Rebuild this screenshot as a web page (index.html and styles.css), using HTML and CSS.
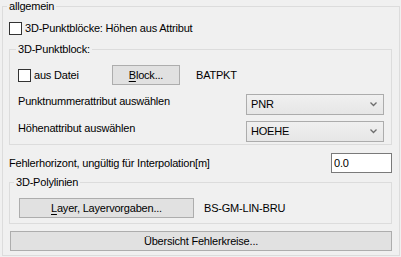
FILE: index.html
```html
<!DOCTYPE html>
<html lang="de">
<head>
    <meta charset="UTF-8">
    <title>Höhen aus Attribut</title>
    <link rel="stylesheet" href="styles.css">
</head>
<body>
    <fieldset class="group outer">
        <legend>allgemein</legend>
        <div class="stack">
            <label class="check-row"><span class="box"></span>3D-Punktblöcke: Höhen aus Attribut</label>

            <fieldset class="group punkt">
                <legend>3D-Punktblock:</legend>
                <div class="row file-row">
                    <label class="check-row file-check"><span class="box"></span>aus Datei</label>
                    <button class="btn block-btn"><u>B</u>lock...</button>
                    <span class="value">BATPKT</span>
                </div>
                <div class="row attr-row first">
                    <span class="attr-label">Punktnummerattribut auswählen</span>
                    <div class="combo">
                        <span>PNR</span>
                        <svg width="7" height="5" viewBox="0 0 7 5"><path d="M0.5 0.5 L3.5 3.5 L6.5 0.5" fill="none" stroke="#6d6d6d" stroke-width="1.3"/></svg>
                    </div>
                </div>
                <div class="row attr-row">
                    <span class="attr-label">Höhenattribut auswählen</span>
                    <div class="combo">
                        <span>HOEHE</span>
                        <svg width="7" height="5" viewBox="0 0 7 5"><path d="M0.5 0.5 L3.5 3.5 L6.5 0.5" fill="none" stroke="#6d6d6d" stroke-width="1.3"/></svg>
                    </div>
                </div>
            </fieldset>

            <div class="row tol-row">
                <span>Fehlerhorizont, ungültig für Interpolation[m]</span>
                <input class="num" type="text" value="0.0">
            </div>

            <fieldset class="group poly">
                <legend>3D-Polylinien</legend>
                <div class="row">
                    <button class="btn layer-btn"><u>L</u>ayer, Layervorgaben...</button>
                    <span class="value layer-value">BS-GM-LIN-BRU</span>
                </div>
            </fieldset>

            <button class="btn wide-btn">Übersicht Fehlerkreise...</button>
        </div>
    </fieldset>
</body>
</html>
```

FILE: styles.css
```css
html, body {
    margin: 0;
    width: 401px;
    height: 257px;
    overflow: hidden;
    background-color: #f0f0f0;
    font-family: "Liberation Sans", Arial, sans-serif;
    font-size: 11px;
    line-height: 13px;
    letter-spacing: -0.2px;
    color: #000;
}
.group {
    border: 1px solid #dcdcdc;
    margin: 0;
    min-width: 0;
}
.group legend {
    padding: 0 2px;
    margin-left: -2px;
    line-height: 13px;
}
.outer {
    margin: 0 1px 0 2px;
    padding: 9px 7px 4px 6px;
}
.stack {
    display: flex;
    flex-direction: column;
}
.check-row {
    display: flex;
    align-items: center;
    gap: 3px;
    height: 13px;
}
.box {
    width: 13px;
    height: 13px;
    box-sizing: border-box;
    border: 1px solid #333;
    background-color: #fff;
}
.row {
    display: flex;
    align-items: center;
}
.punkt {
    margin-top: 8px;
    padding: 9px 7px 2px 8px;
}
.file-row {
    height: 20px;
}
.file-check {
    width: 94px;
}
.btn {
    height: 20px;
    box-sizing: border-box;
    border: 1px solid #adadad;
    background-color: #e1e1e1;
    font: inherit;
    letter-spacing: inherit;
    color: #000;
    padding: 0;
}
.btn u {
    text-decoration-thickness: 1px;
    text-underline-offset: 2px;
}
.block-btn {
    width: 68px;
}
.value {
    margin-left: 16px;
}
.attr-row {
    justify-content: space-between;
    align-items: flex-start;
    height: 21px;
    margin-top: 6px;
}
.attr-row.first {
    margin-top: 9px;
}
.attr-label {
    padding-top: 1px;
}
.combo {
    width: 138px;
    height: 21px;
    box-sizing: border-box;
    border: 1px solid #acacac;
    background: linear-gradient(#f0f0f0, #e6e6e6);
    display: flex;
    align-items: center;
    justify-content: space-between;
    padding: 0 6px 0 4px;
}
.tol-row {
    justify-content: space-between;
    height: 20px;
    margin-top: 8px;
}
.num {
    width: 61px;
    height: 20px;
    box-sizing: border-box;
    border: 1px solid #7a7a7a;
    background-color: #fff;
    font: inherit;
    letter-spacing: inherit;
    padding: 0 2px;
    margin: 0;
}
.poly {
    margin-top: 3px;
    padding: 9px 7px 5px 9px;
}
.poly legend {
    margin-left: -5px;
}
.layer-btn {
    width: 175px;
}
.layer-value {
    margin-left: 10px;
}
.wide-btn {
    margin-top: 7px;
    margin-left: 1px;
    width: calc(100% - 1px);
}
```
